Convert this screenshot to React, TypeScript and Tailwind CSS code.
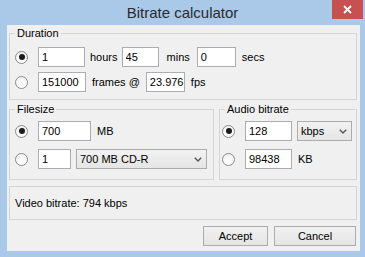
import React from "react";

function Radio({ on }: { on?: boolean }) {
  return (
    <span className="w-[13px] h-[13px] shrink-0 rounded-full border border-[#8a8a8a] bg-linear-to-b from-[#f2f2f2] to-white flex items-center justify-center">
      {on && <span className="w-[6px] h-[6px] rounded-full bg-[#1c1c1c]" />}
    </span>
  );
}

function Field({ value, w, className = "" }: { value: string; w: string; className?: string }) {
  return (
    <input
      readOnly
      value={value}
      className={`${w} ${className} h-[20px] border border-[#abadb3] bg-white pl-[3px] pr-0 text-[11px] leading-[13px] text-black outline-none`}
    />
  );
}

function Combo({ label, w, className = "" }: { label: string; w: string; className?: string }) {
  return (
    <div
      className={`${w} ${className} h-[20px] border border-[#acacac] bg-linear-to-b from-[#f2f2f2] to-[#e5e5e5] flex items-center justify-between pl-[3px] pr-[4px]`}
    >
      <span>{label}</span>
      <svg width="8" height="5" viewBox="0 0 8 5">
        <path d="M0.8 0.8L4 4L7.2 0.8" fill="none" stroke="#555" strokeWidth="1.4" />
      </svg>
    </div>
  );
}

function Button({ label, w }: { label: string; w: string }) {
  return (
    <button
      className={`${w} h-[20px] border border-[#acacac] bg-linear-to-b from-[#f0f0f0] to-[#e5e5e5] text-[11px] text-black flex items-center justify-center`}
    >
      {label}
    </button>
  );
}

export default function App() {
  return (
    <div className="w-[365px] h-[257px] bg-[#aac8e8] flex flex-col font-['Liberation_Sans',Arial,sans-serif] text-[11px] leading-[13px] text-black">
      {/* title bar */}
      <div className="h-[25px] grid grid-cols-[1fr_auto_1fr] items-center">
        <div />
        <div className="text-[15px] leading-[20px] text-[#2b2b2b]">Bitrate calculator</div>
        <div className="self-start justify-self-end mr-[2px] w-[31px] h-[19px] bg-[#c75050] flex items-center justify-center">
          <svg width="9" height="9" viewBox="0 0 9 9">
            <path d="M1 1L8 8M8 1L1 8" stroke="white" strokeWidth="1.8" />
          </svg>
        </div>
      </div>

      {/* client area */}
      <div className="ml-[7px] mr-[5px] h-[226px] bg-[#f0f0f0] pl-[2px] pr-[3px] flex flex-col">
        <fieldset className="mt-[1px] border border-[#d5d5d5]">
          <legend className="ml-[5px] px-[2px] leading-[14px]">Duration</legend>
          <div className="pl-[5px] pt-[7px] pb-[7px] flex flex-col gap-[5px]">
            <div className="flex items-center">
              <Radio on />
              <Field value="1" w="w-[47px]" className="ml-[10px]" />
              <span className="ml-[5px]">hours</span>
              <Field value="45" w="w-[37px]" className="ml-[4px]" />
              <span className="ml-[8px]">mins</span>
              <Field value="0" w="w-[39px]" className="ml-[7px]" />
              <span className="ml-[6px]">secs</span>
            </div>
            <div className="flex items-center">
              <Radio />
              <Field value="151000" w="w-[48px]" className="ml-[10px]" />
              <span className="ml-[6px]">frames @</span>
              <Field value="23.976" w="w-[39px]" className="ml-[6px]" />
              <span className="ml-[6px]">fps</span>
            </div>
          </div>
        </fieldset>

        <div className="mt-[2px] flex gap-[5px]">
          <fieldset className="w-[205px] border border-[#d5d5d5]">
            <legend className="ml-[5px] px-[2px] leading-[14px]">Filesize</legend>
            <div className="pl-[5px] pt-[5px] pb-[10px] flex flex-col gap-[8px]">
              <div className="flex items-center">
                <Radio on />
                <Field value="700" w="w-[53px]" className="ml-[10px]" />
                <span className="ml-[6px]">MB</span>
              </div>
              <div className="flex items-center">
                <Radio />
                <Field value="1" w="w-[33px]" className="ml-[10px]" />
                <Combo label="700 MB CD-R" w="w-[131px]" className="ml-[5px]" />
              </div>
            </div>
          </fieldset>

          <fieldset className="flex-1 border border-[#d5d5d5]">
            <legend className="ml-[5px] px-[2px] leading-[14px]">Audio bitrate</legend>
            <div className="pl-[2px] pt-[5px] pb-[10px] flex flex-col gap-[8px]">
              <div className="flex items-center">
                <Radio on />
                <Field value="128" w="w-[47px]" className="ml-[10px]" />
                <Combo label="kbps" w="w-[55px]" className="ml-[5px]" />
              </div>
              <div className="flex items-center">
                <Radio />
                <Field value="98438" w="w-[47px]" className="ml-[10px]" />
                <span className="ml-[6px]">KB</span>
              </div>
            </div>
          </fieldset>
        </div>

        <div className="mt-[6px] h-[34px] border border-[#d5d5d5] flex items-center pl-[5px]">
          Video bitrate: 794 kbps
        </div>

        <div className="mt-[6px] pr-[1px] flex justify-end gap-[6px]">
          <Button label="Accept" w="w-[65px]" />
          <Button label="Cancel" w="w-[82px]" />
        </div>
      </div>
    </div>
  );
}
